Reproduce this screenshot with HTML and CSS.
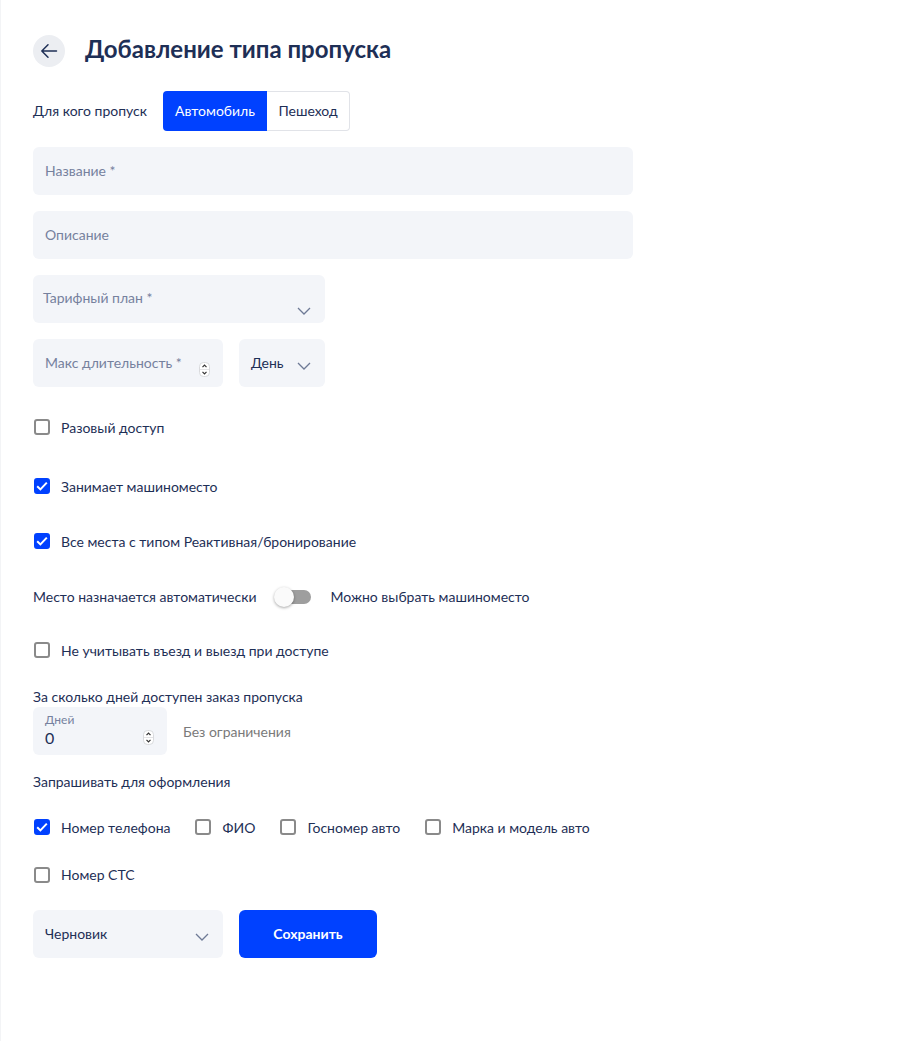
FILE: index.html
```html
<!DOCTYPE html>
<html lang="ru">

<head>
    <meta charset="UTF-8" />
    <meta name="viewport" content="width=device-width, initial-scale=1.0" />
    <title>Добавление типа пропуска</title>
    <link rel="stylesheet" href="styles.css">
</head>

<body>
    <main>
        <header class="page_head">
            <a class="back_btn">
                <svg width="18" height="18" viewBox="0 0 18 18" fill="none" stroke="#1e2f56" stroke-width="1.5" stroke-linecap="round" stroke-linejoin="round">
                    <path d="M16.5 9H1.8M8 2.8 1.8 9 8 15.2" />
                </svg>
            </a>
            <h1 class="title">Добавление типа пропуска</h1>
        </header>

        <div class="who_row">
            <span class="text">Для кого пропуск</span>
            <div class="tabs">
                <div class="tab active">Автомобиль</div>
                <div class="tab">Пешеход</div>
            </div>
        </div>

        <div class="field wide"><span class="hint">Название *</span></div>
        <div class="field wide"><span class="hint">Описание</span></div>
        <div class="field tariff">
            <span class="hint">Тарифный план *</span>
            <svg class="chevron" width="14" height="8" viewBox="0 0 14 8"><path d="M1 1l6 6 6-6" /></svg>
        </div>
        <div class="field_row">
            <div class="field duration">
                <span class="hint">Макс длительность *</span>
                <svg class="spin" width="11" height="15" viewBox="0 0 11 15"><rect x=".5" y=".5" width="10" height="14" rx="4" /><path class="line" d="M1 7.5h9" /><path class="arrow" d="M3.5 5.2l2-2 2 2M3.5 9.8l2 2 2-2" /></svg>
            </div>
            <div class="field unit">
                <span class="value">День</span>
                <svg class="chevron" width="14" height="8" viewBox="0 0 14 8"><path d="M1 1l6 6 6-6" /></svg>
            </div>
        </div>

        <label class="check_row once"><span class="box"></span>Разовый доступ</label>
        <label class="check_row place">
            <span class="box on"><svg width="12" height="10" viewBox="0 0 12 10"><path d="M1.2 5.2 4.4 8.4 10.8 1.6" /></svg></span>Занимает машиноместо
        </label>
        <label class="check_row next">
            <span class="box on"><svg width="12" height="10" viewBox="0 0 12 10"><path d="M1.2 5.2 4.4 8.4 10.8 1.6" /></svg></span>Все места с типом Реактивная/бронирование
        </label>
        <div class="switch_row">
            <span class="text">Место назначается автоматически</span>
            <span class="switch"><i class="knob"></i></span>
            <span class="text">Можно выбрать машиноместо</span>
        </div>
        <label class="check_row skip"><span class="box"></span>Не учитывать въезд и выезд при доступе</label>

        <div class="text days_label">За сколько дней доступен заказ пропуска</div>
        <div class="days_row">
            <div class="field days">
                <span class="small_hint">Дней</span>
                <span class="value big">0</span>
                <svg class="spin" width="11" height="15" viewBox="0 0 11 15"><rect x=".5" y=".5" width="10" height="14" rx="4" /><path class="line" d="M1 7.5h9" /><path class="arrow" d="M3.5 5.2l2-2 2 2M3.5 9.8l2 2 2-2" /></svg>
            </div>
            <span class="no_limit">Без ограничения</span>
        </div>

        <div class="text ask_label">Запрашивать для оформления</div>
        <div class="ask_row">
            <label class="check_row">
                <span class="box on"><svg width="12" height="10" viewBox="0 0 12 10"><path d="M1.2 5.2 4.4 8.4 10.8 1.6" /></svg></span>Номер телефона
            </label>
            <label class="check_row"><span class="box"></span>ФИО</label>
            <label class="check_row"><span class="box"></span>Госномер авто</label>
            <label class="check_row"><span class="box"></span>Марка и модель авто</label>
        </div>
        <label class="check_row sts"><span class="box"></span>Номер СТС</label>

        <div class="bottom_row">
            <div class="field status">
                <span class="value">Черновик</span>
                <svg class="chevron" width="14" height="8" viewBox="0 0 14 8"><path d="M1 1l6 6 6-6" /></svg>
            </div>
            <div class="save_btn">Сохранить</div>
        </div>
    </main>
</body>

</html>
```

FILE: styles.css
```css
html,
body {
    height: 100%;
    padding: 0;
    margin: 0;
}

body {
    background: #fff;
    color: #1e2f56;
    font-family: Lato, "Noto Sans", sans-serif;
    font-size: 14px;
    line-height: 20px;
}

main {
    min-height: 100%;
    box-sizing: border-box;
    padding: 35px 0 0 32px;
    border-left: 1px solid #f3f4f6;
}

.page_head {
    display: flex;
    align-items: flex-start;
    height: 32px;
}

.back_btn {
    width: 32px;
    height: 32px;
    border-radius: 50%;
    background: #eceef2;
    display: flex;
    align-items: center;
    justify-content: center;
}

.title {
    margin: 0 0 0 20px;
    font-size: 24px;
    line-height: 28px;
    font-weight: 700;
}

.who_row {
    display: flex;
    align-items: center;
    margin-top: 24px;
}

.tabs {
    display: flex;
    height: 40px;
    margin-left: 16px;
}

.tab {
    box-sizing: border-box;
    width: 83px;
    display: flex;
    align-items: center;
    justify-content: center;
    border: 1px solid #e1e3e8;
    border-left: 0;
    border-radius: 0 4px 4px 0;
}

.tab.active {
    width: 104px;
    background: #0041ff;
    border: 0;
    border-radius: 4px 0 0 4px;
    color: #fff;
}

/* поля */
.field {
    position: relative;
    box-sizing: border-box;
    height: 48px;
    background: #f3f5f9;
    border-radius: 6px;
    display: flex;
    align-items: center;
    padding: 0 12px;
}

.wide {
    width: 600px;
    margin-top: 16px;
}

.tariff {
    width: 292px;
    margin-top: 16px;
    padding-left: 10px;
    padding-bottom: 2px;
}

.hint {
    color: #76819e;
}

.value {
    color: #1e2f56;
}

.chevron {
    position: absolute;
    right: 14px;
    top: 32px;
    fill: none;
    stroke: #6e7a96;
    stroke-width: 1.3;
}

.unit .chevron,
.status .chevron {
    top: 23px;
}

.field_row {
    display: flex;
    gap: 16px;
    margin-top: 16px;
}

.duration {
    width: 190px;
    padding-bottom: 1px;
}

.unit {
    width: 86px;
}

.spin {
    position: absolute;
    right: 13px;
    top: 23px;
    fill: none;
}

.spin rect {
    fill: #fff;
    stroke: #d9dadd;
}

.spin .line {
    stroke: #e4e4e6;
}

.spin .arrow {
    stroke: #333;
    stroke-width: 1.2;
}

/* чекбоксы */
.check_row {
    display: flex;
    align-items: center;
    height: 24px;
}

.box {
    box-sizing: border-box;
    width: 16px;
    height: 16px;
    margin: 0 11.5px 2px 0.5px;
    border: 2px solid #8a8a8a;
    border-radius: 3px;
    display: flex;
    align-items: center;
    justify-content: center;
}

.box.on {
    background: #0041ff;
    border-color: #0041ff;
}

.box svg {
    fill: none;
    stroke: #fff;
    stroke-width: 2;
}

.once {
    margin-top: 29px;
}

.place {
    margin-top: 35px;
}

.next {
    margin-top: 31px;
}

.switch_row {
    display: flex;
    align-items: center;
    height: 24px;
    margin-top: 31px;
}

.switch {
    position: relative;
    width: 34px;
    height: 14px;
    margin: 0 19px 0 21px;
    border-radius: 7px;
    background: #9e9e9e;
}

.knob {
    position: absolute;
    left: -3px;
    top: -3px;
    width: 20px;
    height: 20px;
    border-radius: 50%;
    background: #fafafa;
    box-shadow: 0 1px 3px rgba(0, 0, 0, 0.35);
}

.skip {
    margin-top: 30px;
}

.days_label {
    margin-top: 24px;
}

.days_row {
    display: flex;
    align-items: center;
}

.days {
    width: 134px;
    display: block;
    padding-top: 6px;
}

.small_hint {
    display: block;
    font-size: 12px;
    line-height: 14px;
    color: #76819e;
}

.big {
    display: block;
    font-size: 16px;
    line-height: 21px;
}

.no_limit {
    margin-left: 16px;
    padding-top: 2px;
    color: #7a7a7a;
}

.ask_label {
    margin-top: 17px;
}

.ask_row {
    display: flex;
    gap: 24px;
    margin-top: 24px;
}

.sts {
    margin-top: 23px;
}

.sts .box {
    margin-bottom: 0;
}

.bottom_row {
    display: flex;
    gap: 16px;
    margin-top: 23px;
}

.status {
    width: 190px;
}

.save_btn {
    width: 138px;
    height: 48px;
    border-radius: 6px;
    background: #0041ff;
    color: #fff;
    font-weight: 700;
    display: flex;
    align-items: center;
    justify-content: center;
}
```
